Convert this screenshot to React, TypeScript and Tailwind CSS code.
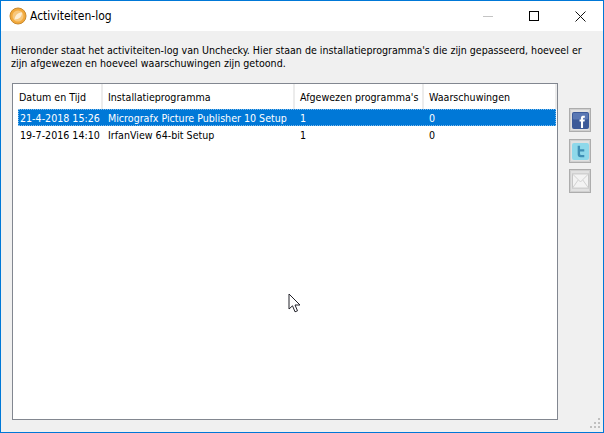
const FONT = "font-['DejaVu_Sans',sans-serif] [font-stretch:condensed]";

function Cell({ w, pl, children }: { w: string; pl: string; children: React.ReactNode }) {
  return (
    <div className={`${w} ${pl} pt-[2px] shrink-0 h-full flex items-center whitespace-nowrap border-r-2 border-r-[#ececec]`}>
      {children}
    </div>
  );
}

function Row({ cells, selected = false }: { cells: string[]; selected?: boolean }) {
  return (
    <div className={`flex h-[17px] pt-[2px] ml-[5px] mr-[1px] whitespace-nowrap ${selected ? "bg-[#0078d7] text-white outline-1 -outline-offset-1 outline-dotted outline-[#7fbbeb]" : "text-black"}`}>
      <div className="w-[85px] shrink-0 pl-[2px] flex items-center">{cells[0]}</div>
      <div className="w-[192px] shrink-0 pl-[5px] flex items-center">{cells[1]}</div>
      <div className="w-[129px] shrink-0 pl-[5px] flex items-center">{cells[2]}</div>
      <div className="flex-1 pl-[5px] flex items-center">{cells[3]}</div>
    </div>
  );
}

function Side({ children, extra = "" }: { children: React.ReactNode; extra?: string }) {
  return (
    <div className={`w-[22px] h-[24px] border border-[#adadad] bg-[#e1e1e1] shadow-[inset_0_0_0_1px_#d0d0d0] flex items-center justify-center ${extra}`}>
      {children}
    </div>
  );
}

export default function App() {
  return (
    <div className={`relative w-[604px] h-[433px] border border-[#0078d7] bg-[#f0f0f0] flex flex-col overflow-hidden text-[10.6px] leading-[13px] text-black ${FONT}`}>
      <div className="h-[30px] shrink-0 bg-white flex items-center">
        <svg width="18" height="18" viewBox="0 0 18 18" className="ml-[8px]">
          <circle cx="9" cy="9" r="8" fill="#f2a93b" stroke="#c98a2e" />
          <circle cx="9" cy="9" r="5.500" fill="#f7c77c" />
          <path d="M5.500 12.500C6 8 9 5.500 13 5.500c0 4-2.500 7-7.500 7z" fill="#fdeed4" />
        </svg>
        <span className="ml-[3px] text-[12px]">Activiteiten-log</span>
        <div className="ml-auto flex items-center h-full">
          <div className="w-[46px] flex justify-center"><div className="w-[10px] h-px bg-[#c4c4c4]" /></div>
          <div className="w-[46px] flex justify-center"><div className="w-[10px] h-[10px] border border-black" /></div>
          <div className="w-[46px] flex justify-center">
            <svg width="11" height="11" viewBox="0 0 11 11"><path d="M.5.5l10 10M10.500.5l-10 10" stroke="#111" fill="none" /></svg>
          </div>
        </div>
      </div>
      <div className="flex-1 flex flex-col pl-[10px] pr-[12px] pt-[13px] pb-[12px]">
        <p className="whitespace-nowrap m-0">Hieronder staat het activiteiten-log van Unchecky. Hier staan de installatieprogramma's die zijn gepasseerd, hoeveel er</p>
        <p className="whitespace-nowrap m-0">zijn afgewezen en hoeveel waarschuwingen zijn getoond.</p>
        <div className="flex-1 flex mt-[13px]">
          <div className="w-[546px] ml-[1px] border border-[#828790] bg-white">
            <div className="flex h-[25px]">
              <Cell w="w-[90px]" pl="pl-[6px]">Datum en Tijd</Cell>
              <Cell w="w-[192px]" pl="pl-[5px]">Installatieprogramma</Cell>
              <Cell w="w-[129px]" pl="pl-[5px]">Afgewezen programma's</Cell>
              <Cell w="w-[133px]" pl="pl-[5px]">Waarschuwingen</Cell>
            </div>
            <Row selected cells={["21-4-2018 15:26", "Micrografx Picture Publisher 10 Setup", "1", "0"]} />
            <Row cells={["19-7-2016 14:10", "IrfanView 64-bit Setup", "1", "0"]} />
          </div>
          <div className="ml-[11px] pt-[25px] flex flex-col gap-[6px]">
            <Side extra="mb-[1px]">
              <svg width="17" height="17" viewBox="0 0 18 18">
                <rect width="18" height="18" rx="2" fill="#3b5998" />
                <rect x="1" y="1" width="16" height="7" rx="1" fill="#5a78b4" />
                <path d="M9.500 17V10H8V8h1.500V6.300C9.500 4.500 10.700 4 12 4h1.600v2.100h-1.100c-.6 0-.8.3-.8.9V8h1.900l-.3 2h-1.600v7z" fill="#fff" />
              </svg>
            </Side>
            <Side>
              <svg width="17" height="17" viewBox="0 0 18 18">
                <rect width="18" height="18" rx="2" fill="#8ed8ea" />
                <path d="M6 3h2.500v3.500H13V9H8.500v2.500c0 1 .6 1.300 1.300 1.300H13V15h-4c-2 0-3-1.200-3-3.200z" fill="#3f8fb5" />
              </svg>
            </Side>
            <Side>
              <svg width="17" height="16" viewBox="0 0 18 16">
                <rect x=".5" y=".5" width="17" height="15" fill="#f3f3f3" stroke="#c4c4c4" />
                <path d="M.5.5L9 9l8.500-8.500M.5 15.500L6.500 7M17.500 15.500L11.500 7" fill="none" stroke="#cfcfcf" />
              </svg>
            </Side>
          </div>
        </div>
      </div>
      <svg className="absolute left-[287px] top-[292px]" width="14" height="21" viewBox="0 0 14 21">
        <path d="M1 1v15l3.500-3.200 2.500 6 2.500-1-2.500-5.800h5z" fill="#fff" stroke="#22222a" strokeWidth="1" />
      </svg>
      <svg className="absolute right-[2px] bottom-[3px]" width="11" height="11" viewBox="0 0 11 11" fill="#c0c0c0">
        <rect x="8" y="0" width="2" height="2" /><rect x="8" y="4" width="2" height="2" /><rect x="4" y="4" width="2" height="2" />
        <rect x="8" y="8" width="2" height="2" /><rect x="4" y="8" width="2" height="2" /><rect x="0" y="8" width="2" height="2" />
      </svg>
    </div>
  );
}
